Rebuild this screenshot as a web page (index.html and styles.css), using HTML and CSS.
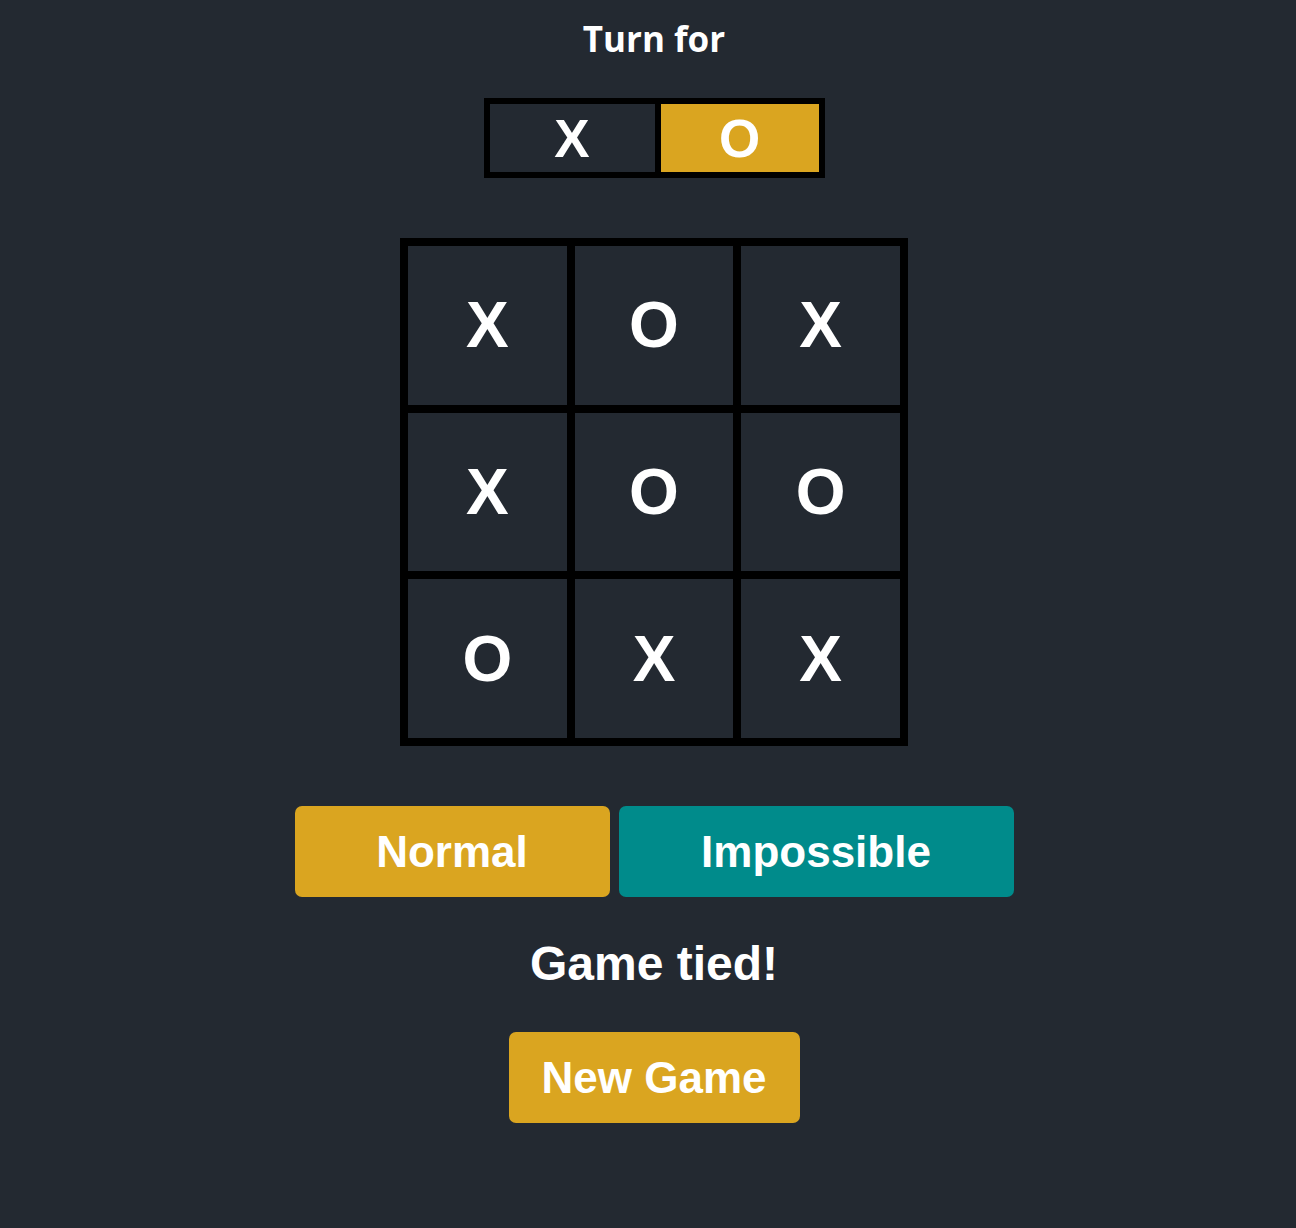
FILE: index.html
```html
<!DOCTYPE html>
<html lang="en">
<head>
<meta charset="utf-8">
<title>Tic Tac Toe</title>
<link rel="stylesheet" href="styles.css">
</head>
<body>
<main class="app">
  <h2 class="turn-title">Turn for</h2>
  <div class="turn">
    <div class="turn-cell turn-x">X</div>
    <div class="turn-cell turn-o active">O</div>
  </div>
  <div class="board">
    <div class="cell">X</div>
    <div class="cell">O</div>
    <div class="cell">X</div>
    <div class="cell">X</div>
    <div class="cell">O</div>
    <div class="cell">O</div>
    <div class="cell">O</div>
    <div class="cell">X</div>
    <div class="cell">X</div>
  </div>
  <div class="modes">
    <button class="btn btn-normal">Normal</button>
    <button class="btn btn-impossible">Impossible</button>
  </div>
  <p class="status">Game tied!</p>
  <button class="btn btn-new">New Game</button>
</main>
</body>
</html>
```
FILE: styles.css
```css
html, body {
  margin: 0;
  padding: 0;
  background: #232931;
  color: #ffffff;
}

body {
  font-family: "Liberation Sans", Arial, sans-serif;
  min-height: 1228px;
}

.app {
  padding-left: 12px;
  display: flex;
  flex-direction: column;
  align-items: center;
}

.turn-title {
  margin: 14px 0 0;
  font-family: "Open Sans", "Noto Sans", sans-serif;
  font-weight: 700;
  font-size: 35px;
  line-height: 49px;
}

.turn {
  margin-top: 35px;
  display: flex;
  border: 3px solid #000;
}

.turn-cell {
  border: 3px solid #000;
  height: 68px;
  display: flex;
  align-items: center;
  justify-content: center;
  font-weight: 700;
  font-size: 53px;
}

.turn-x {
  width: 165px;
}

.turn-o {
  width: 158px;
}

.turn-cell.active {
  background: #daa520;
}

.board {
  margin-top: 60px;
  border: 4px solid #000;
  width: 500px;
  height: 500px;
  display: grid;
  grid-template-columns: repeat(3, 1fr);
  grid-template-rows: repeat(3, 1fr);
}

.cell {
  border: 4px solid #000;
  display: flex;
  align-items: center;
  justify-content: center;
  font-weight: 700;
  font-size: 64px;
}

.modes {
  margin-top: 60px;
  display: flex;
  gap: 9px;
}

.btn {
  font-family: "Liberation Sans", Arial, sans-serif;
  font-weight: 700;
  font-size: 44px;
  line-height: 51px;
  color: #ffffff;
  border: none;
  border-radius: 7px;
  height: 91px;
  padding: 0;
  cursor: pointer;
}

.btn-normal {
  width: 315px;
  background: #daa520;
}

.btn-impossible {
  width: 395px;
  background: #008b8b;
}

.status {
  margin: 39px 0 0;
  font-weight: 700;
  font-size: 48px;
  line-height: 55px;
}

.btn-new {
  margin-top: 41px;
  width: 291px;
  background: #daa520;
}
```
